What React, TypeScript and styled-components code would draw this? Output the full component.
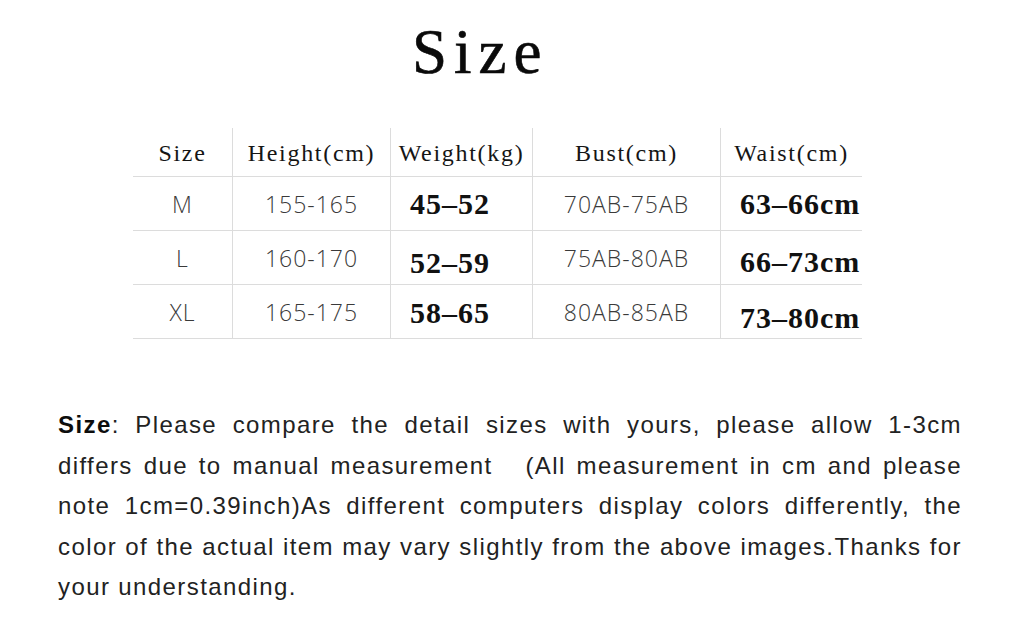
import React from 'react';
import styled, { createGlobalStyle } from 'styled-components';

const GlobalStyle = createGlobalStyle`
  html, body {
    margin: 0;
    padding: 0;
    background: #ffffff;
  }
  body {
    font-family: 'Liberation Sans', Arial, sans-serif;
    color: #1a1a1a;
  }
`;

const Page = styled.div`
  width: 1012px;
  height: 636px;
  background: #ffffff;
  display: flex;
  flex-direction: column;
  overflow: hidden;
`;

const Title = styled.h1`
  margin: 0;
  padding: 17px 0 0 412px;
  height: 70px;
  line-height: 70px;
  font-family: 'Liberation Serif', 'Times New Roman', serif;
  font-size: 63px;
  font-weight: 400;
  letter-spacing: 7px;
  color: #0a0a0a;
  -webkit-text-stroke: 0.6px #0a0a0a;
`;

const Table = styled.div`
  margin: 41px 0 0 133px;
  display: grid;
  grid-template-columns: 99px 158px 142px 188px 142px;
  grid-auto-rows: 54px;
  grid-template-rows: 49px;
`;

const Cell = styled.div<{ $first?: boolean; $align?: 'center' | 'left' }>`
  box-sizing: border-box;
  display: flex;
  align-items: center;
  justify-content: ${({ $align }) => ($align === 'left' ? 'flex-start' : 'center')};
  padding-left: ${({ $align }) => ($align === 'left' ? '19px' : '0')};
  border-bottom: 1px solid #dcdcdc;
  border-left: ${({ $first }) => ($first ? 'none' : '1px solid #dcdcdc')};
  white-space: nowrap;
`;

const HeadText = styled.span`
  font-family: 'Liberation Serif', 'Times New Roman', serif;
  font-size: 24px;
  letter-spacing: 1.7px;
  color: #151515;
  margin-top: 2px;
`;

const LightText = styled.span`
  font-family: 'Open Sans', 'DejaVu Sans', sans-serif;
  font-weight: 300;
  font-size: 23px;
  letter-spacing: 1px;
  color: #3a3a3a;
`;

const SerifValue = styled.span<{ $shift?: number }>`
  font-family: 'Liberation Serif', 'Times New Roman', serif;
  font-weight: 700;
  font-size: 30px;
  letter-spacing: 1px;
  color: #111111;
  position: relative;
  top: ${({ $shift }) => $shift ?? 0}px;
`;

const Notes = styled.div`
  margin: 66px 0 0 58px;
  width: 904px;
  font-family: 'Liberation Sans', Arial, sans-serif;
  font-size: 24px;
  line-height: 40.5px;
  letter-spacing: 1.4px;
  color: #222222;
`;

const NoteLine = styled.div<{ $last?: boolean }>`
  white-space: nowrap;
  text-align: ${({ $last }) => ($last ? 'left' : 'justify')};
  text-align-last: ${({ $last }) => ($last ? 'left' : 'justify')};
`;

const Strong = styled.b`
  color: #0d0d0d;
`;

const headers = ['Size', 'Height(cm)', 'Weight(kg)', 'Bust(cm)', 'Waist(cm)'];

const rows = [
  { size: 'M', height: '155-165', weight: '45–52', bust: '70AB-75AB', waist: '63–66cm', wShift: 0, cShift: 0 },
  { size: 'L', height: '160-170', weight: '52–59', bust: '75AB-80AB', waist: '66–73cm', wShift: 5, cShift: 4 },
  { size: 'XL', height: '165-175', weight: '58–65', bust: '80AB-85AB', waist: '73–80cm', wShift: 1, cShift: 6 },
];

export default function App() {
  return (
    <>
      <GlobalStyle />
      <Page>
        <Title>Size</Title>
        <Table>
          {headers.map((h, i) => (
            <Cell key={h} $first={i === 0}>
              <HeadText>{h}</HeadText>
            </Cell>
          ))}
          {rows.map((r) => (
            <React.Fragment key={r.size}>
              <Cell $first>
                <LightText>{r.size}</LightText>
              </Cell>
              <Cell>
                <LightText>{r.height}</LightText>
              </Cell>
              <Cell $align='left'>
                <SerifValue $shift={r.wShift}>{r.weight}</SerifValue>
              </Cell>
              <Cell>
                <LightText>{r.bust}</LightText>
              </Cell>
              <Cell $align='left'>
                <SerifValue $shift={r.cShift}>{r.waist}</SerifValue>
              </Cell>
            </React.Fragment>
          ))}
        </Table>
        <Notes>
          <NoteLine>
            <Strong>Size</Strong>: Please compare the detail sizes with yours, please allow 1-3cm
          </NoteLine>
          <NoteLine>differs due to manual measurement &nbsp; (All measurement in cm and please</NoteLine>
          <NoteLine>note 1cm=0.39inch)As different computers display colors differently, the</NoteLine>
          <NoteLine>color of the actual item may vary slightly from the above images.Thanks for</NoteLine>
          <NoteLine $last>your understanding.</NoteLine>
        </Notes>
      </Page>
    </>
  );
}
